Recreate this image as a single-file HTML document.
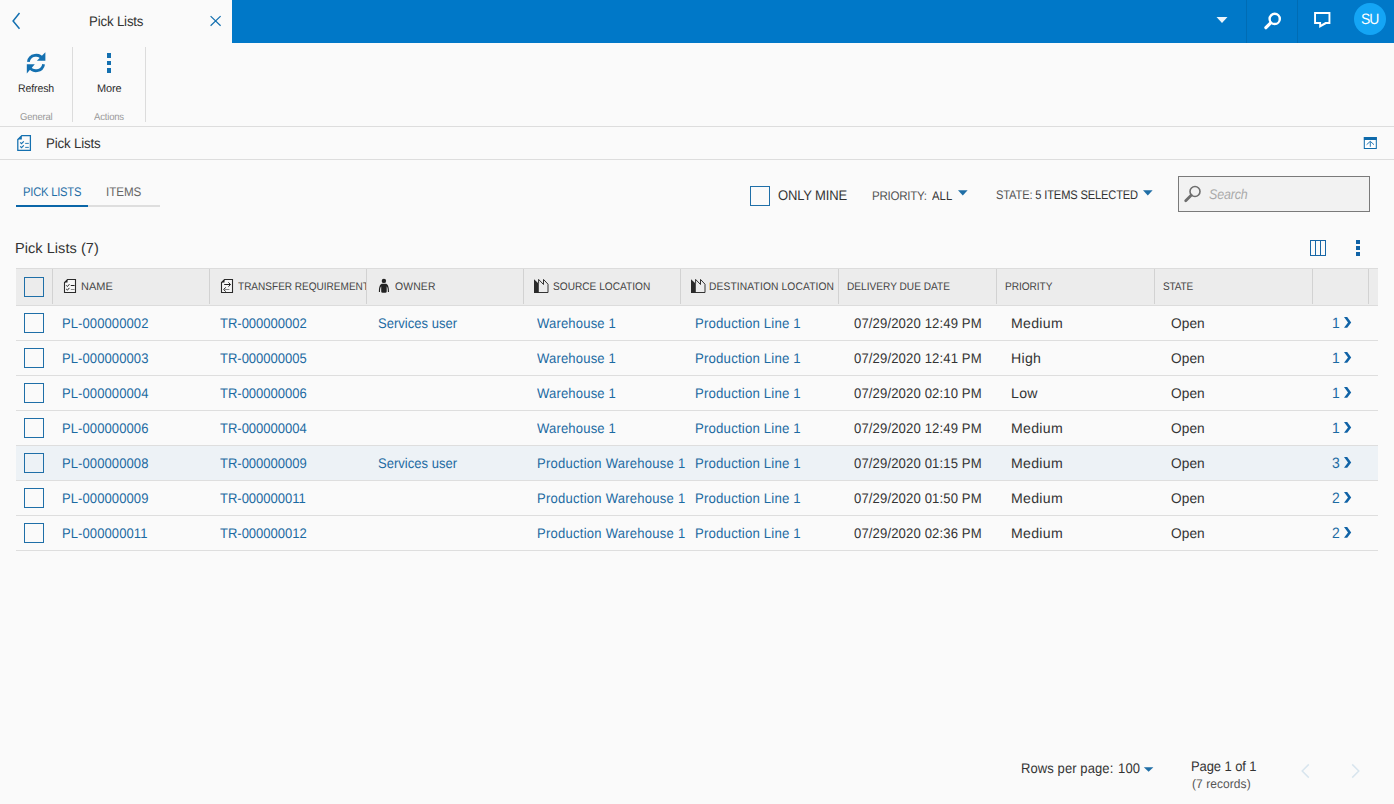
<!DOCTYPE html>
<html lang="en">
<head>
<meta charset="utf-8">
<title>Pick Lists</title>
<style>
*{box-sizing:border-box;margin:0;padding:0}
html,body{width:1394px;height:804px;overflow:hidden;background:#fafafa}
body{font-family:"Liberation Sans",sans-serif;color:#333;position:relative;font-size:13px;text-rendering:geometricPrecision}
.abs{position:absolute}
.t{position:absolute;white-space:nowrap;line-height:1;transform-origin:0 0}
#topbar{left:0;top:0;width:1394px;height:43px;background:#0078c8}
#toptab{left:0;top:0;width:232px;height:43px;background:#fafafa}
.vsep{position:absolute;width:1px;background:#dcdcdc}
.hline{position:absolute;height:1px;background:#dddddd;left:0;width:1394px}
.cb{position:absolute;width:20px;height:20px;border:1px solid #1f6fa8;background:transparent}
.blue{color:#1c689e}
.lnk{color:#1c6aa2;font-size:14px;transform:scaleX(0.93)}
.cell{font-size:14px;color:#333;transform:scaleX(0.93)}
.hd{font-size:11px;color:#444;transform:scaleX(0.92)}
.cnt{font-size:15px;color:#1c6aa2}
.hs{top:269px;height:35px;background:#d2d2d2}
.row{position:absolute;left:16px;width:1362px;height:35px;border-bottom:1px solid #dedede}
</style>
</head>
<body>
<!-- top bar -->
<div id="topbar" class="abs"></div>
<div id="toptab" class="abs"></div>
<svg class="abs" style="left:11px;top:12px" width="11" height="18" viewBox="0 0 11 18"><path d="M8.5 1.1 L2.1 8.9 L8.5 16.7" fill="none" stroke="#1470b0" stroke-width="1.5"/></svg>
<div class="t" id="tabtitle" style="left:89.0px;top:14.0px;font-size:14px;color:#333;letter-spacing:-0.17px;transform:scaleX(0.9461)">Pick Lists</div>
<svg class="abs" style="left:209px;top:15px" width="13" height="13" viewBox="0 0 13 13"><path d="M1.6 1.1 L11.6 10.8 M11.6 1.1 L1.6 10.8" fill="none" stroke="#1470b0" stroke-width="1.2"/></svg>

<!-- top right icons -->
<svg class="abs" style="left:1216px;top:16px" width="12" height="8" viewBox="0 0 12 8"><path d="M0.5 1 L11.5 1 L6 7 Z" fill="#eaf4fb"/></svg>
<div class="vsep" style="left:1246px;top:0;height:43px;background:#006cb4"></div>
<svg class="abs" style="left:1262px;top:11px" width="22" height="20" viewBox="0 0 22 20"><circle cx="12.7" cy="7.9" r="5.1" fill="none" stroke="#fff" stroke-width="2.4"/><path d="M8.7 11.9 L3.9 16.7" stroke="#fff" stroke-width="3.2" stroke-linecap="round"/></svg>
<div class="vsep" style="left:1297px;top:0;height:43px;background:#006cb4"></div>
<svg class="abs" style="left:1312px;top:10px" width="21" height="20" viewBox="0 0 21 20"><path fill-rule="evenodd" fill="#fff" d="M2.1 2.1 H18.4 V13.9 H14.4 L7.2 17.9 V13.9 H2.1 Z M4 4 V12 H9.1 V14.4 L13.4 12 H16.5 V4 Z"/></svg>
<div class="abs" style="left:1354px;top:3px;width:32px;height:32px;border-radius:50%;background:#14a5f5"></div>
<div class="t" id="su" style="left:1361.0px;top:12.0px;font-size:15px;color:#fff;letter-spacing:-1.202px;transform:scaleX(0.93)">SU</div>

<!-- ribbon -->
<svg class="abs" style="left:25px;top:51px" width="23" height="24" viewBox="0 0 23 24"><g fill="none" stroke="#1470b0" stroke-width="2.8"><path d="M3.38 10.9 A7.7 7.7 0 0 1 17.9 8.6"/><path d="M18.62 13.2 A7.7 7.7 0 0 1 4.1 15.4"/></g><path d="M20.4 1.3 V9.8 H11.9 Z" fill="#1470b0"/><path d="M1.8 13.2 H9.8 L1.8 22.6 Z" fill="#1470b0"/></svg>
<div class="t" id="refresh" style="left:18.0px;top:84.0px;font-size:11px;color:#2b2b2b;letter-spacing:-0.13px;transform:scaleX(0.9574)">Refresh</div>
<div class="t" id="general" style="left:20.0px;top:113.0px;font-size:10px;color:#999;letter-spacing:-0.194px;transform:scaleX(0.9506)">General</div>
<div class="vsep" style="left:72px;top:47px;height:75px"></div>
<div class="abs" style="left:107px;top:53.2px;width:4.2px;height:4.4px;background:#1470b0"></div>
<div class="abs" style="left:107px;top:61px;width:4.2px;height:3.9px;background:#1470b0"></div>
<div class="abs" style="left:107px;top:68.3px;width:4.2px;height:4.5px;background:#1470b0"></div>
<div class="t" id="more" style="left:97.0px;top:84.0px;font-size:11px;color:#2b2b2b;letter-spacing:-0.143px;transform:scaleX(0.9954)">More</div>
<div class="t" id="actions" style="left:94.0px;top:113.0px;font-size:10px;color:#999;letter-spacing:-0.201px;transform:scaleX(0.9537)">Actions</div>
<div class="vsep" style="left:145px;top:47px;height:75px"></div>
<div class="hline" style="top:126px"></div>

<!-- title bar -->
<svg class="abs" style="left:16px;top:134px" width="17" height="18" viewBox="0 0 17 18"><path d="M5.8 1.5 H14.4 V16.3 H1.8 V5.5 Z" fill="none" stroke="#1470b0" stroke-width="1.25"/><path d="M1.8 5.5 L5.8 1.5 V5.5 Z" fill="#1470b0"/><path d="M4.2 8.3 L5.5 9.6 L7.8 7.3 M4.2 12.3 L5.5 13.6 L7.8 11.3" fill="none" stroke="#1470b0" stroke-width="1.15"/><path d="M9.2 9.4 H12.8 M9.2 13.4 H12.8" stroke="#1470b0" stroke-width="0.9"/></svg>
<div class="t" id="pgtitle" style="left:46.0px;top:136.0px;font-size:14px;color:#333;letter-spacing:-0.186px;transform:scaleX(0.9505)">Pick Lists</div>
<svg class="abs" style="left:1362px;top:135px" width="16" height="15" viewBox="0 0 16 15"><rect x="2.3" y="2.5" width="12" height="11" fill="#fff" stroke="#0e6aab" stroke-width="1"/><rect x="1.9" y="2" width="12.8" height="3" fill="#0e6aab"/><path d="M8.3 11.8 V6.6 M4.6 9.7 L8.3 6.3 L12 9.7" fill="none" stroke="#0e6aab" stroke-width="0.9"/></svg>
<div class="hline" style="top:159px"></div>

<!-- tabs -->
<div class="t" id="tab1" style="left:23.0px;top:186.0px;font-size:12.5px;color:#1f6ea6;letter-spacing:-0.246px;transform:scaleX(0.8974)">PICK LISTS</div>
<div class="t" id="tab2" style="left:106.0px;top:186.0px;font-size:12.5px;color:#666;letter-spacing:-0.046px;transform:scaleX(0.9292)">ITEMS</div>
<div class="abs" style="left:16px;top:205px;width:72px;height:2px;background:#0a66a8"></div>
<div class="abs" style="left:88px;top:205px;width:72px;height:2px;background:#dedede"></div>

<!-- filters -->
<div class="cb" style="left:750px;top:186px"></div>
<div class="t" id="onlymine" style="left:778.0px;top:188.0px;font-size:14px;color:#333;letter-spacing:-0.164px;transform:scaleX(0.9299)">ONLY MINE</div>
<div class="t" id="prio" style="left:872.0px;top:190.0px;font-size:12.5px;color:#555;letter-spacing:-0.298px;transform:scaleX(0.9263)">PRIORITY:</div>
<div class="t" id="all" style="left:932.0px;top:190.0px;font-size:12.5px;color:#333;letter-spacing:0.05px;transform:scaleX(0.9019)">ALL</div>
<svg class="abs" style="left:957px;top:189px" width="12" height="8" viewBox="0 0 12 8"><path d="M1 1.2 H10.6 L5.8 6.4 Z" fill="#1f6ea6"/></svg>
<div class="t" id="state" style="left:996.0px;top:189.0px;font-size:12.5px;color:#555;letter-spacing:-0.168px;transform:scaleX(0.8894)">STATE: <span style="color:#333">5 ITEMS SELECTED</span></div>
<svg class="abs" style="left:1142px;top:189px" width="12" height="8" viewBox="0 0 12 8"><path d="M1 1.2 H10.6 L5.8 6.4 Z" fill="#1f6ea6"/></svg>
<div class="abs" style="left:1178px;top:176px;width:192px;height:36px;border:1px solid #7a7a7a;background:#f2f2f2"></div>
<svg class="abs" style="left:1183px;top:185px" width="19" height="19" viewBox="0 0 19 19"><circle cx="12" cy="6.5" r="5" fill="none" stroke="#6e6e6e" stroke-width="1.6"/><path d="M8.2 10.3 L2.7 15.8" stroke="#6e6e6e" stroke-width="2.8" stroke-linecap="round"/></svg>
<div class="t" id="search" style="left:1209.0px;top:187.0px;font-size:14px;font-style:italic;color:#aaa;letter-spacing:-0.183px;transform:scaleX(0.8903)">Search</div>

<!-- grid title -->
<div class="t" id="gtitle" style="left:15.0px;top:242.0px;font-size:14.5px;color:#333;letter-spacing:0.057px;transform:scaleX(1.0)">Pick Lists (7)</div>
<svg class="abs" style="left:1309px;top:239px" width="19" height="18" viewBox="0 0 19 18" shape-rendering="crispEdges"><rect x="1.5" y="1.5" width="15" height="15" fill="none" stroke="#1766a6" stroke-width="1"/><path d="M6.5 1.5 V16.5 M11.5 1.5 V16.5" stroke="#1766a6" stroke-width="1"/></svg>
<div class="abs" style="left:1356px;top:240px;width:4px;height:4px;background:#0f62a6"></div>
<div class="abs" style="left:1356px;top:246px;width:4px;height:4px;background:#0f62a6"></div>
<div class="abs" style="left:1356px;top:252px;width:4px;height:4px;background:#0f62a6"></div>

<!-- grid header -->
<div class="abs" id="ghead" style="left:16px;top:268px;width:1362px;height:38px;background:#ececec;border-top:1px solid #dcdcdc;border-bottom:1px solid #dcdcdc"></div>
<div class="cb" style="left:24px;top:277px"></div>
<div class="vsep hs" style="left:52px"></div>
<div class="vsep hs" style="left:209px"></div>
<div class="vsep hs" style="left:366px"></div>
<div class="vsep hs" style="left:523px"></div>
<div class="vsep hs" style="left:680px"></div>
<div class="vsep hs" style="left:838px"></div>
<div class="vsep hs" style="left:996px"></div>
<div class="vsep hs" style="left:1154px"></div>
<div class="vsep hs" style="left:1312px"></div>
<div class="vsep hs" style="left:1368px"></div>

<!-- header icons -->
<svg class="abs" style="left:62px;top:278px" width="16" height="16" viewBox="0 0 16 16"><path d="M5.5 1.5 H13.5 V14.5 H2.5 V4.5 Z" fill="#f6f6f6" stroke="#2a2a2a" stroke-width="1.1"/><path d="M2.5 4.5 L5.5 1.5 V4.5 Z" fill="#222"/><path d="M4.2 7.3 L5.4 8.5 L7.4 6.2 M4.2 11 L5.4 12.2 L7.4 9.9" fill="none" stroke="#222" stroke-width="1"/><path d="M8.8 7.5 H12.6" stroke="#222" stroke-width="1"/><path d="M8.8 11.5 H12.6" stroke="#888" stroke-width="1"/></svg>
<svg class="abs" style="left:219px;top:278px" width="16" height="16" viewBox="0 0 16 16"><path d="M5.5 1.5 H13.5 V14.5 H2.5 V4.5 Z" fill="#f6f6f6" stroke="#2a2a2a" stroke-width="1.1"/><path d="M2.5 4.5 L5.5 1.5 V4.5 Z" fill="#222"/><path d="M5.2 6.5 H11.2 M9.4 4.4 L11.6 6.5 L9.4 8.7" fill="none" stroke="#222" stroke-width="1"/><path d="M10.4 11.5 H5.6" stroke="#888" stroke-width="1"/><path d="M6.8 9.4 L4.6 11.5 L6.8 13.6" fill="none" stroke="#222" stroke-width="1"/></svg>
<svg class="abs" style="left:377px;top:278px" width="14" height="16" viewBox="0 0 14 16"><circle cx="6.9" cy="2.9" r="2.2" fill="#222"/><path d="M1.9 13.9 C1.9 8 3.4 5.8 5.4 5.8 H8.5 C10.5 5.8 12 8 12 13.9 H10.9 C10.9 11 10.6 9.2 9.7 8.2 V13.4 Q9.7 14.8 8.3 14.8 H5.6 Q4.2 14.8 4.2 13.4 V8.2 C3.3 9.2 3 11 3 13.9 Z" fill="#222"/></svg>
<svg class="abs loc" style="left:533px;top:278px" width="17" height="16" viewBox="0 0 17 16"><path d="M5.6 5.6 V1.4 L10.5 6.5 V1.4 L15 6.2 V14.5 H1.2" fill="none" stroke="#333" stroke-width="1"/><path d="M1 1.2 L5.8 5.8 V15 H1 Z" fill="#2a2a2a"/></svg>
<svg class="abs loc" style="left:690px;top:278px" width="17" height="16" viewBox="0 0 17 16"><path d="M5.6 5.6 V1.4 L10.5 6.5 V1.4 L15 6.2 V14.5 H1.2" fill="none" stroke="#333" stroke-width="1"/><path d="M1 1.2 L5.8 5.8 V15 H1 Z" fill="#2a2a2a"/></svg>

<!-- header labels -->
<div class="t hd" id="h1" style="left:81.0px;top:282.0px;letter-spacing:0.001px;transform:scaleX(0.9985)">NAME</div>
<div class="abs" style="left:238px;top:270px;width:128px;height:34px;overflow:hidden"><div class="t hd" id="h2" style="left:-0.4px;top:12px;transform:scaleX(0.912)">TRANSFER REQUIREMENT</div></div>
<div class="t hd" id="h3" style="left:395.0px;top:282.0px;letter-spacing:0.164px;transform:scaleX(0.9435)">OWNER</div>
<div class="t hd" id="h4" style="left:553.0px;top:282.0px;letter-spacing:0.017px;transform:scaleX(0.92)">SOURCE LOCATION</div>
<div class="t hd" id="h5" style="left:709.0px;top:282.0px;letter-spacing:0.125px;transform:scaleX(0.933)">DESTINATION LOCATION</div>
<div class="t hd" id="h6" style="left:847.0px;top:282.0px;letter-spacing:0.003px;transform:scaleX(0.92)">DELIVERY DUE DATE</div>
<div class="t hd" id="h7" style="left:1005.0px;top:282.0px;letter-spacing:-0.059px;transform:scaleX(0.92)">PRIORITY</div>
<div class="t hd" id="h8" style="left:1163.0px;top:282.0px;letter-spacing:-0.175px;transform:scaleX(0.9134)">STATE</div>

<!-- ROWS -->
<div id="rows">
<div class="row" style="top:306px;">
<div class="cb" style="left:8px;top:7px"></div>
<div class="t lnk c0" style="left:46.0px;top:10.0px;letter-spacing:0.099px;transform:scaleX(0.93)">PL-000000002</div>
<div class="t lnk c1" style="left:204.0px;top:10.0px;letter-spacing:-0.017px;transform:scaleX(0.93)">TR-000000002</div>
<div class="t lnk c2" style="left:362.0px;top:10.0px;letter-spacing:0.023px;transform:scaleX(0.93)">Services user</div>
<div class="t lnk c3" style="left:521.0px;top:10.0px;letter-spacing:0.186px;transform:scaleX(0.9314)">Warehouse 1</div>
<div class="t lnk c4" style="left:679.0px;top:10.0px;letter-spacing:0.176px;transform:scaleX(0.9454)">Production Line 1</div>
<div class="t cell c5" style="left:838.0px;top:10.0px;letter-spacing:0.133px;transform:scaleX(0.9366)">07/29/2020 12:49 PM</div>
<div class="t cell c6" style="left:995.0px;top:10.0px;letter-spacing:0.294px;transform:scaleX(1.0082)">Medium</div>
<div class="t cell c7" style="left:1155.0px;top:10.0px;letter-spacing:0.091px;transform:scaleX(0.9762)">Open</div>
<div class="t cnt" style="left:1316.0px;top:10.0px;transform:scaleX(0.93)">1</div>
<svg class="abs" style="left:1327px;top:10px" width="10" height="14" viewBox="0 0 10 14"><path d="M1 1 H4.2 L8.2 6.4 L4.2 11.8 H1 L5 6.4 Z" fill="#1163a6"/></svg>
</div>
<div class="row" style="top:341px;">
<div class="cb" style="left:8px;top:7px"></div>
<div class="t lnk c0" style="left:46.0px;top:10.0px;letter-spacing:0.099px;transform:scaleX(0.93)">PL-000000003</div>
<div class="t lnk c1" style="left:204.0px;top:10.0px;letter-spacing:-0.017px;transform:scaleX(0.93)">TR-000000005</div>
<div class="t lnk c3" style="left:521.0px;top:10.0px;letter-spacing:0.186px;transform:scaleX(0.9314)">Warehouse 1</div>
<div class="t lnk c4" style="left:679.0px;top:10.0px;letter-spacing:0.176px;transform:scaleX(0.9454)">Production Line 1</div>
<div class="t cell c5" style="left:838.0px;top:10.0px;letter-spacing:0.133px;transform:scaleX(0.9366)">07/29/2020 12:41 PM</div>
<div class="t cell c6" style="left:995.0px;top:10.0px;letter-spacing:0.294px;transform:scaleX(1.0082)">High</div>
<div class="t cell c7" style="left:1155.0px;top:10.0px;letter-spacing:0.091px;transform:scaleX(0.9762)">Open</div>
<div class="t cnt" style="left:1316.0px;top:10.0px;transform:scaleX(0.93)">1</div>
<svg class="abs" style="left:1327px;top:10px" width="10" height="14" viewBox="0 0 10 14"><path d="M1 1 H4.2 L8.2 6.4 L4.2 11.8 H1 L5 6.4 Z" fill="#1163a6"/></svg>
</div>
<div class="row" style="top:376px;">
<div class="cb" style="left:8px;top:7px"></div>
<div class="t lnk c0" style="left:46.0px;top:10.0px;letter-spacing:0.099px;transform:scaleX(0.93)">PL-000000004</div>
<div class="t lnk c1" style="left:204.0px;top:10.0px;letter-spacing:-0.017px;transform:scaleX(0.93)">TR-000000006</div>
<div class="t lnk c3" style="left:521.0px;top:10.0px;letter-spacing:0.186px;transform:scaleX(0.9314)">Warehouse 1</div>
<div class="t lnk c4" style="left:679.0px;top:10.0px;letter-spacing:0.176px;transform:scaleX(0.9454)">Production Line 1</div>
<div class="t cell c5" style="left:838.0px;top:10.0px;letter-spacing:0.133px;transform:scaleX(0.9366)">07/29/2020 02:10 PM</div>
<div class="t cell c6" style="left:995.0px;top:10.0px;letter-spacing:0.294px;transform:scaleX(1.0082)">Low</div>
<div class="t cell c7" style="left:1155.0px;top:10.0px;letter-spacing:0.091px;transform:scaleX(0.9762)">Open</div>
<div class="t cnt" style="left:1316.0px;top:10.0px;transform:scaleX(0.93)">1</div>
<svg class="abs" style="left:1327px;top:10px" width="10" height="14" viewBox="0 0 10 14"><path d="M1 1 H4.2 L8.2 6.4 L4.2 11.8 H1 L5 6.4 Z" fill="#1163a6"/></svg>
</div>
<div class="row" style="top:411px;">
<div class="cb" style="left:8px;top:7px"></div>
<div class="t lnk c0" style="left:46.0px;top:10.0px;letter-spacing:0.099px;transform:scaleX(0.93)">PL-000000006</div>
<div class="t lnk c1" style="left:204.0px;top:10.0px;letter-spacing:-0.017px;transform:scaleX(0.93)">TR-000000004</div>
<div class="t lnk c3" style="left:521.0px;top:10.0px;letter-spacing:0.186px;transform:scaleX(0.9314)">Warehouse 1</div>
<div class="t lnk c4" style="left:679.0px;top:10.0px;letter-spacing:0.176px;transform:scaleX(0.9454)">Production Line 1</div>
<div class="t cell c5" style="left:838.0px;top:10.0px;letter-spacing:0.133px;transform:scaleX(0.9366)">07/29/2020 12:49 PM</div>
<div class="t cell c6" style="left:995.0px;top:10.0px;letter-spacing:0.294px;transform:scaleX(1.0082)">Medium</div>
<div class="t cell c7" style="left:1155.0px;top:10.0px;letter-spacing:0.091px;transform:scaleX(0.9762)">Open</div>
<div class="t cnt" style="left:1316.0px;top:10.0px;transform:scaleX(0.93)">1</div>
<svg class="abs" style="left:1327px;top:10px" width="10" height="14" viewBox="0 0 10 14"><path d="M1 1 H4.2 L8.2 6.4 L4.2 11.8 H1 L5 6.4 Z" fill="#1163a6"/></svg>
</div>
<div class="row" style="top:446px;background:#edf2f6;">
<div class="cb" style="left:8px;top:7px"></div>
<div class="t lnk c0" style="left:46.0px;top:10.0px;letter-spacing:0.099px;transform:scaleX(0.93)">PL-000000008</div>
<div class="t lnk c1" style="left:204.0px;top:10.0px;letter-spacing:-0.017px;transform:scaleX(0.93)">TR-000000009</div>
<div class="t lnk c2" style="left:362.0px;top:10.0px;letter-spacing:0.023px;transform:scaleX(0.93)">Services user</div>
<div class="t lnk c3" style="left:521.0px;top:10.0px;letter-spacing:0.261px;transform:scaleX(0.9314)">Production Warehouse 1</div>
<div class="t lnk c4" style="left:679.0px;top:10.0px;letter-spacing:0.176px;transform:scaleX(0.9454)">Production Line 1</div>
<div class="t cell c5" style="left:838.0px;top:10.0px;letter-spacing:0.133px;transform:scaleX(0.9366)">07/29/2020 01:15 PM</div>
<div class="t cell c6" style="left:995.0px;top:10.0px;letter-spacing:0.294px;transform:scaleX(1.0082)">Medium</div>
<div class="t cell c7" style="left:1155.0px;top:10.0px;letter-spacing:0.091px;transform:scaleX(0.9762)">Open</div>
<div class="t cnt" style="left:1316.0px;top:10.0px;transform:scaleX(0.93)">3</div>
<svg class="abs" style="left:1327px;top:10px" width="10" height="14" viewBox="0 0 10 14"><path d="M1 1 H4.2 L8.2 6.4 L4.2 11.8 H1 L5 6.4 Z" fill="#1163a6"/></svg>
</div>
<div class="row" style="top:481px;">
<div class="cb" style="left:8px;top:7px"></div>
<div class="t lnk c0" style="left:46.0px;top:10.0px;letter-spacing:0.099px;transform:scaleX(0.93)">PL-000000009</div>
<div class="t lnk c1" style="left:204.0px;top:10.0px;letter-spacing:-0.017px;transform:scaleX(0.93)">TR-000000011</div>
<div class="t lnk c3" style="left:521.0px;top:10.0px;letter-spacing:0.261px;transform:scaleX(0.9314)">Production Warehouse 1</div>
<div class="t lnk c4" style="left:679.0px;top:10.0px;letter-spacing:0.176px;transform:scaleX(0.9454)">Production Line 1</div>
<div class="t cell c5" style="left:838.0px;top:10.0px;letter-spacing:0.133px;transform:scaleX(0.9366)">07/29/2020 01:50 PM</div>
<div class="t cell c6" style="left:995.0px;top:10.0px;letter-spacing:0.294px;transform:scaleX(1.0082)">Medium</div>
<div class="t cell c7" style="left:1155.0px;top:10.0px;letter-spacing:0.091px;transform:scaleX(0.9762)">Open</div>
<div class="t cnt" style="left:1316.0px;top:10.0px;transform:scaleX(0.93)">2</div>
<svg class="abs" style="left:1327px;top:10px" width="10" height="14" viewBox="0 0 10 14"><path d="M1 1 H4.2 L8.2 6.4 L4.2 11.8 H1 L5 6.4 Z" fill="#1163a6"/></svg>
</div>
<div class="row" style="top:516px;">
<div class="cb" style="left:8px;top:7px"></div>
<div class="t lnk c0" style="left:46.0px;top:10.0px;letter-spacing:0.099px;transform:scaleX(0.93)">PL-000000011</div>
<div class="t lnk c1" style="left:204.0px;top:10.0px;letter-spacing:-0.017px;transform:scaleX(0.93)">TR-000000012</div>
<div class="t lnk c3" style="left:521.0px;top:10.0px;letter-spacing:0.261px;transform:scaleX(0.9314)">Production Warehouse 1</div>
<div class="t lnk c4" style="left:679.0px;top:10.0px;letter-spacing:0.176px;transform:scaleX(0.9454)">Production Line 1</div>
<div class="t cell c5" style="left:838.0px;top:10.0px;letter-spacing:0.133px;transform:scaleX(0.9366)">07/29/2020 02:36 PM</div>
<div class="t cell c6" style="left:995.0px;top:10.0px;letter-spacing:0.294px;transform:scaleX(1.0082)">Medium</div>
<div class="t cell c7" style="left:1155.0px;top:10.0px;letter-spacing:0.091px;transform:scaleX(0.9762)">Open</div>
<div class="t cnt" style="left:1316.0px;top:10.0px;transform:scaleX(0.93)">2</div>
<svg class="abs" style="left:1327px;top:10px" width="10" height="14" viewBox="0 0 10 14"><path d="M1 1 H4.2 L8.2 6.4 L4.2 11.8 H1 L5 6.4 Z" fill="#1163a6"/></svg>
</div>
</div><!--endrows-->

<!-- footer -->
<div class="t" id="rpp" style="left:1021.0px;top:761.0px;font-size:14px;color:#333;letter-spacing:0.09px;transform:scaleX(0.93)">Rows per page:</div>
<div class="t" id="n100" style="left:1118.0px;top:761.0px;font-size:14px;color:#333;letter-spacing:0.149px;transform:scaleX(0.93)">100</div>
<svg class="abs" style="left:1143px;top:766px" width="12" height="7" viewBox="0 0 12 7"><path d="M0.8 1.2 H10.4 L5.6 5.8 Z" fill="#1f6ea6"/></svg>
<div class="t" id="pg" style="left:1191.0px;top:759.0px;font-size:14px;color:#333;letter-spacing:-0.107px;transform:scaleX(0.93)">Page 1 of 1</div>
<div class="t" id="recs" style="left:1192.0px;top:778.0px;font-size:12.5px;color:#555;letter-spacing:0.066px;transform:scaleX(0.9601)">(7 records)</div>
<svg class="abs" style="left:1300px;top:763px" width="11" height="16" viewBox="0 0 11 16"><path d="M8.8 1.4 L2.2 8 L8.8 14.6" fill="none" stroke="#d8e5ee" stroke-width="1.5"/></svg>
<svg class="abs" style="left:1350px;top:763px" width="11" height="16" viewBox="0 0 11 16"><path d="M2.2 1.4 L8.8 8 L2.2 14.6" fill="none" stroke="#d8e5ee" stroke-width="1.5"/></svg>
</body>
</html>
